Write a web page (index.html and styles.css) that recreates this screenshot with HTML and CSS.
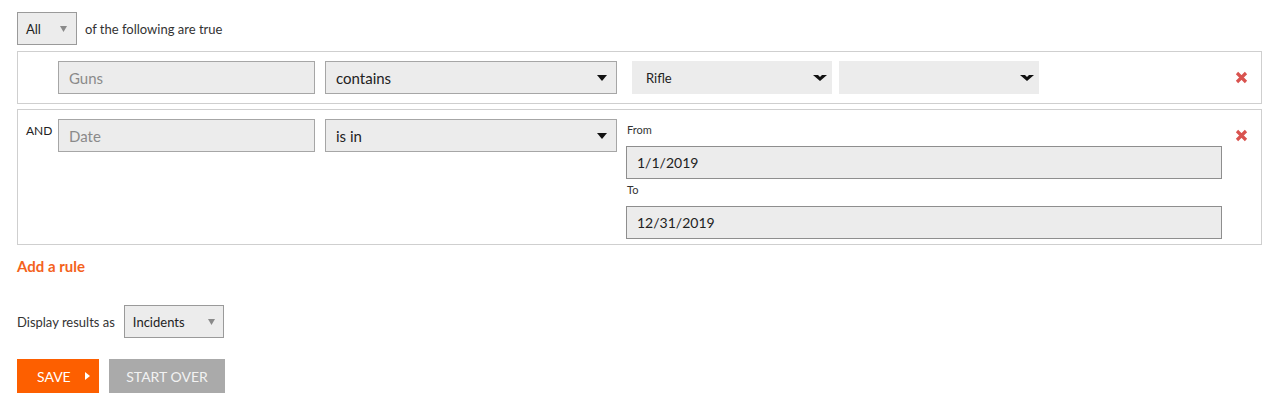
FILE: index.html
```html
<!DOCTYPE html>
<html>
<head>
<meta charset="utf-8">
<link rel="stylesheet" href="styles.css">
</head>
<body>
<div class="page">
  <div class="match-row">
    <div class="sel sel-all"><span>All</span><svg class="tri-gray" width="7" height="6" viewBox="0 0 7 6"><path d="M0 0H7L3.5 6Z" fill="#8a8a8a"/></svg></div>
    <span class="match-text">of the following are true</span>
  </div>

  <div class="rule">
    <div class="conj"></div>
    <div class="field field-input placeholder">Guns</div>
    <div class="field field-select"><span>contains</span><svg class="tri" width="10" height="6" viewBox="0 0 10 6"><path d="M0 0H10L5 6Z" fill="#111"/></svg></div>
    <div class="values">
      <div class="flat-row">
        <div class="flat-sel"><span>Rifle</span><svg class="chev" width="14" height="6" viewBox="0 0 14 6"><path d="M0 0H5L7 2L9 0H14L7 6Z" fill="#111"/></svg></div>
        <div class="flat-sel"><span></span><svg class="chev" width="14" height="6" viewBox="0 0 14 6"><path d="M0 0H5L7 2L9 0H14L7 6Z" fill="#111"/></svg></div>
      </div>
    </div>
    <div class="remove"><svg width="13" height="13" viewBox="0 0 13 13"><path d="M2 2L11 11M11 2L2 11" stroke="#d9534f" stroke-width="3.2"/></svg></div>
  </div>

  <div class="rule rule-date">
    <div class="conj">AND</div>
    <div class="field field-input placeholder">Date</div>
    <div class="field field-select"><span>is in</span><svg class="tri" width="10" height="6" viewBox="0 0 10 6"><path d="M0 0H10L5 6Z" fill="#111"/></svg></div>
    <div class="values">
      <label class="small-label">From</label>
      <div class="date-input">1/1/2019</div>
      <label class="small-label">To</label>
      <div class="date-input">12/31/2019</div>
    </div>
    <div class="remove"><svg width="13" height="13" viewBox="0 0 13 13"><path d="M2 2L11 11M11 2L2 11" stroke="#d9534f" stroke-width="3.2"/></svg></div>
  </div>

  <a class="add-rule">Add a rule</a>

  <div class="display-row">
    <span class="display-text">Display results as</span>
    <div class="sel sel-incidents"><span>Incidents</span><svg class="tri-gray" width="7" height="6" viewBox="0 0 7 6"><path d="M0 0H7L3.5 6Z" fill="#8a8a8a"/></svg></div>
  </div>

  <div class="buttons">
    <button class="btn btn-save">SAVE <svg class="arrow" width="5" height="8" viewBox="0 0 5 8"><path d="M0 0L5 4L0 8Z" fill="#fff"/></svg></button>
    <button class="btn btn-reset">START OVER</button>
  </div>
</div>
</body>
</html>
```

FILE: styles.css
```css
* { box-sizing: border-box; }
html, body { margin: 0; padding: 0; background: #fff; }
body {
  font-family: Lato, "Noto Sans", sans-serif;
  color: #333;
  width: 1281px;
  height: 416px;
  overflow: hidden;
}
.page {
  padding: 12px 19px 0 17px;
}
.match-row {
  display: flex;
  align-items: center;
  gap: 8px;
  height: 33px;
}
.sel {
  display: flex;
  align-items: center;
  justify-content: space-between;
  height: 33px;
  background: #ececec;
  border: 1px solid #9a9a9a;
  font-size: 13px;
  color: #222;
  padding: 0 9px 0 8px;
}
.sel-all { width: 60px; }
.sel-incidents { width: 100px; margin-left: 1px; padding-right: 8px; }
.match-text, .display-text {
  font-size: 13px;
  color: #333;
}
.rule {
  margin-top: 6px;
  border: 1px solid #cfcfcf;
  display: flex;
  align-items: flex-start;
  padding: 9px 0 9px 0;
}
.rule-date { margin-top: 5px; padding-bottom: 5px; }
.conj {
  width: 40px;
  flex: none;
  padding: 4px 0 0 8px;
  font-size: 12px;
  color: #222;
}
.field {
  height: 33px;
  background: #ececec;
  border: 1px solid #a6a6a6;
  font-size: 15px;
  display: flex;
  align-items: center;
  padding: 0 10px;
  flex: none;
}
.field-input { width: 257px; }
.placeholder { color: #8a8a8a; }
.field-select {
  width: 292px;
  margin-left: 10px;
  justify-content: space-between;
  color: #222;
  padding-right: 9px;
}
.values {
  margin-left: 9px;
  width: 596px;
  flex: none;
  display: flex;
  flex-direction: column;
}
.flat-row {
  display: flex;
  gap: 7px;
  padding-left: 6px;
}
.flat-sel {
  width: 200px;
  height: 33px;
  background: #ececec;
  display: flex;
  align-items: center;
  justify-content: space-between;
  padding: 0 5px 0 14px;
  font-size: 13px;
  color: #222;
}
.small-label {
  font-size: 11px;
  color: #333;
  line-height: 14px;
  padding: 4px 0 9px 1px;
  display: block;
}
.date-input {
  height: 33px;
  background: #ececec;
  border: 1px solid #8e8e8e;
  font-size: 14px;
  color: #222;
  display: flex;
  align-items: center;
  padding: 0 10px;
}
.remove {
  margin-left: 12px;
  height: 33px;
  width: 15px;
  display: flex;
  align-items: center;
  justify-content: center;
}
.add-rule {
  display: block;
  margin-top: 12px;
  font-size: 15px;
  font-weight: bold;
  color: #f4621c;
  line-height: 18px;
}
.display-row {
  margin-top: 30px;
  display: flex;
  align-items: center;
  gap: 8px;
}
.buttons {
  margin-top: 21px;
  display: flex;
  gap: 10px;
}
.btn {
  height: 34px;
  border: none;
  font-family: Lato, "Noto Sans", sans-serif;
  font-size: 14px;
  padding: 0;
  cursor: pointer;
  display: flex;
  align-items: center;
}
.btn-save {
  width: 82px;
  background: #fd5f00;
  color: #fff;
  padding-left: 20px;
}
.btn-save .arrow {
  margin-left: 14px;
}
.btn-reset {
  width: 116px;
  background: #aaaaaa;
  color: #f2f2f2;
  justify-content: center;
}
```
